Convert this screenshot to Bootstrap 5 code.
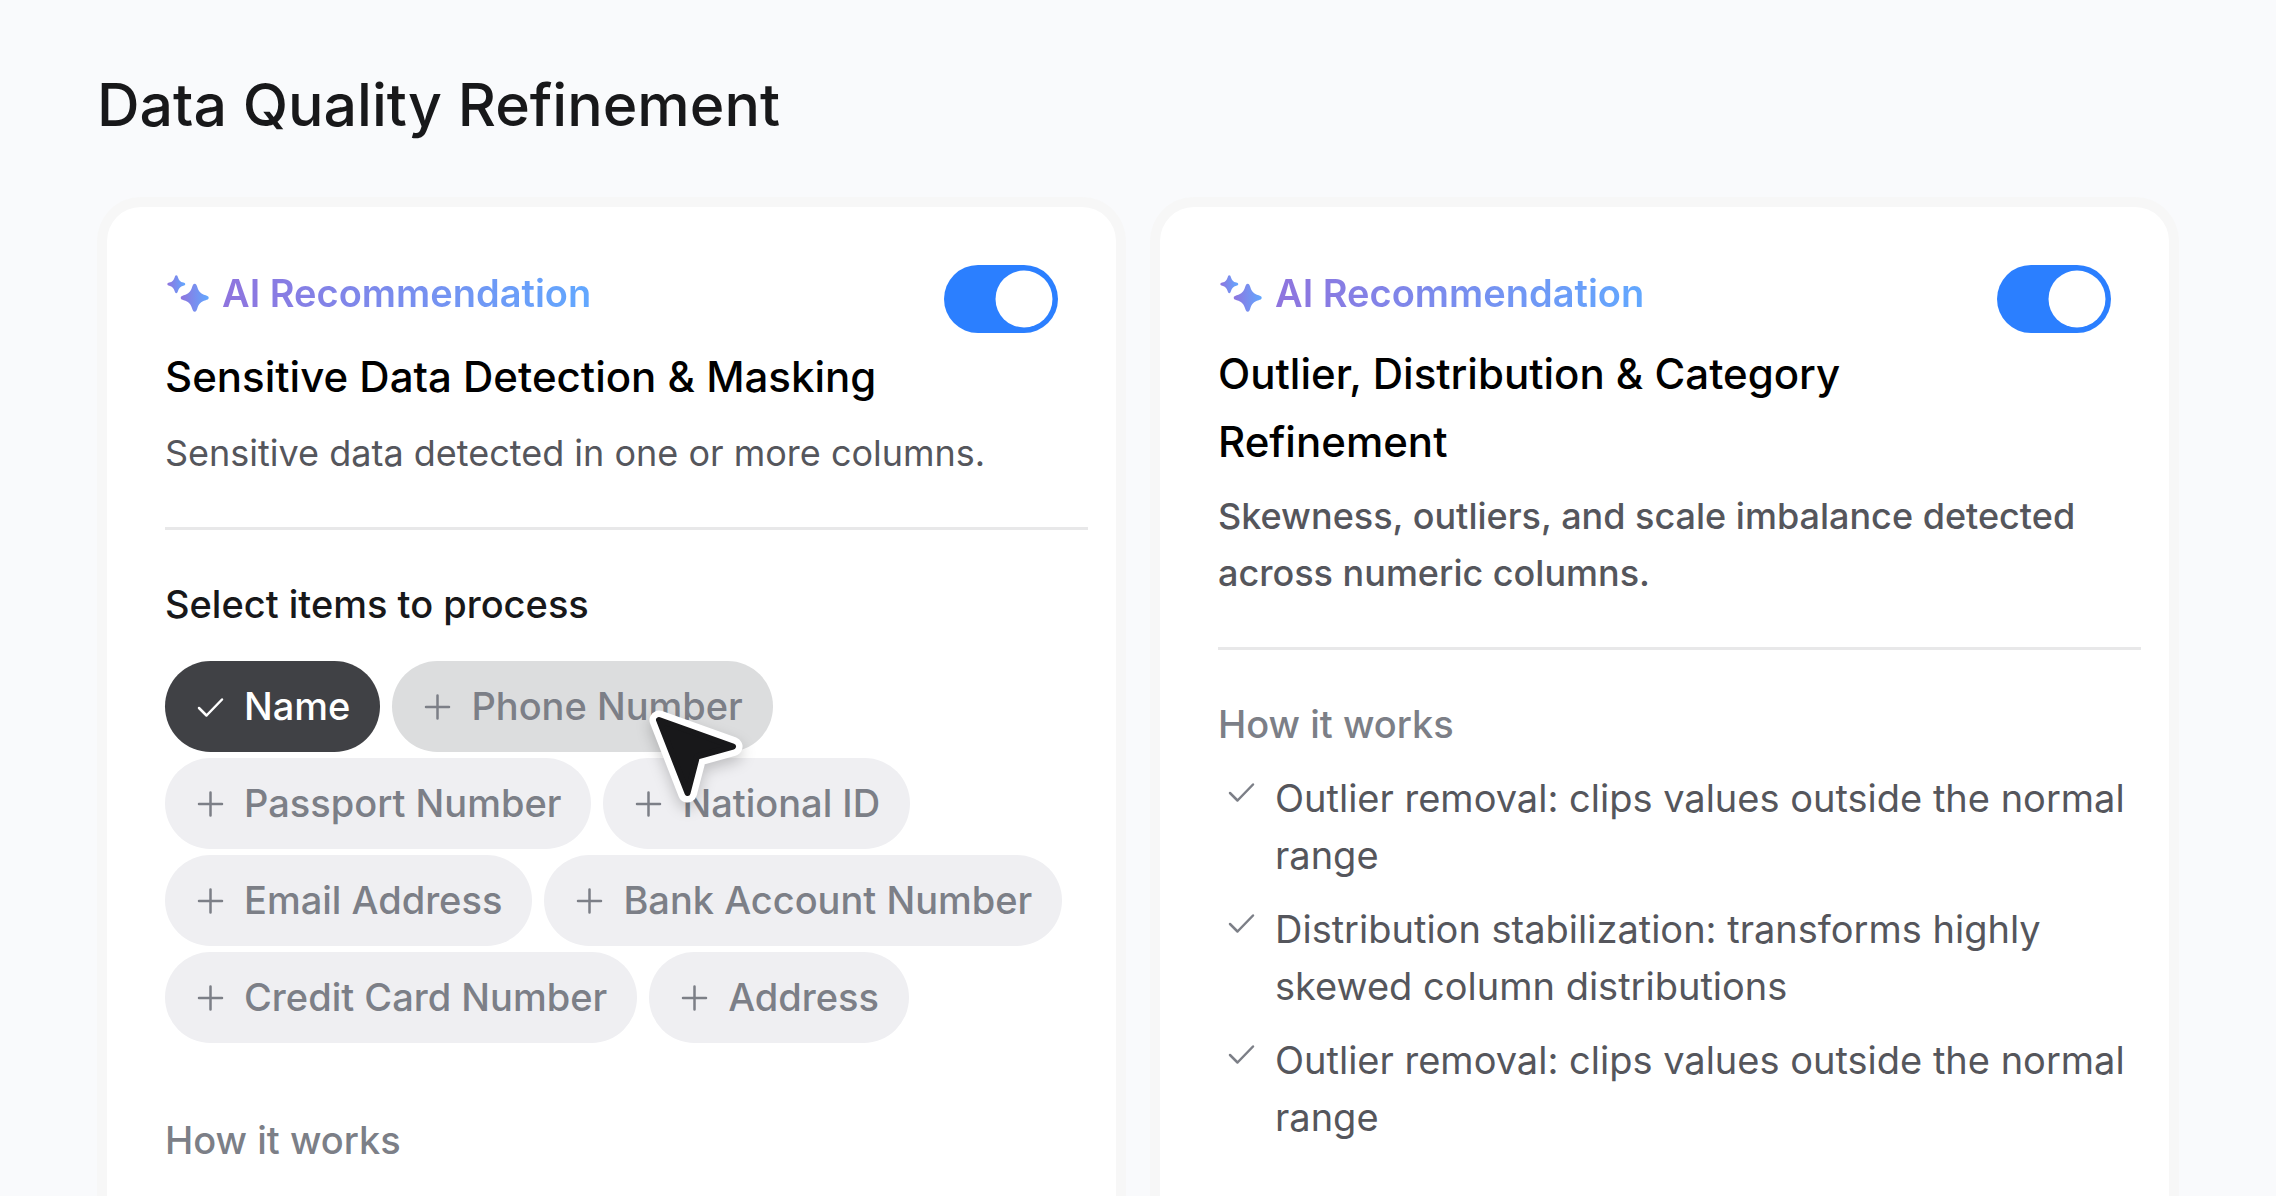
<!DOCTYPE html>
<html lang="en">
<head>
<meta charset="utf-8">
<meta name="viewport" content="width=device-width, initial-scale=1">
<title>Data Quality Refinement</title>
<link href="https://cdn.jsdelivr.net/npm/bootstrap@5.3.0/dist/css/bootstrap.min.css" rel="stylesheet">
<style>
  body { font-family: Inter, "Liberation Sans", sans-serif; background: #f9fafc; color: #18181a; }
  .page { padding: 60px 97px 0; }
  .page-title { font-size: 59px; line-height: 90px; font-weight: 500; margin-bottom: 47px; }
  .panels { gap: 24px; }
  .panel { flex: 1 1 0; min-width: 0; border: 10px solid #f7f7f7; border-bottom: 0; border-radius: 44px 44px 0 0; padding: 58px 28px 0 58px; }
  .panel-head, .panel-text { padding-right: 30px; }
  .ai-tag { gap: 13px; font-size: 38px; line-height: 57px; font-weight: 600; }
  .ai-tag span { background: linear-gradient(90deg, #8f74de, #62a8ff); -webkit-background-clip: text; background-clip: text; color: transparent; }
  .panel-title { font-size: 42px; line-height: 68px; font-weight: 500; color: #000; margin: 18px 0 12px; }
  .panel-title.single { margin: 21px 0 14px; }
  .panel-text { font-size: 36px; line-height: 57px; color: #55565c; margin-bottom: 45px; }
  .rule-line { border-top: 3px solid #e8e8e9; margin-bottom: 46px; }
  .label { font-size: 38px; line-height: 57px; font-weight: 500; margin-bottom: 28px; }
  .label.quiet { color: #7c7f87; margin-bottom: 17px; }
  .form-switch .form-check-input.toggle { width: 114px; height: 68px; margin: 0; border: 0; border-radius: 34px; cursor: pointer;
    background-image: url("data:image/svg+xml,%3csvg xmlns='http://www.w3.org/2000/svg' viewBox='-4 -4 8 8'%3e%3ccircle r='3.35' fill='%23fff'/%3e%3c/svg%3e"); }
  .toggle:checked { background-color: #2b7fff; }
  .chips { gap: 6px 12px; margin-bottom: 69px; }
  .chip { --bs-btn-bg: #efeff2; --bs-btn-color: #7c7f87; --bs-btn-hover-bg: #dcddde; --bs-btn-hover-color: #7c7f87;
    --bs-btn-border-width: 0; --bs-btn-padding-x: 30px; --bs-btn-padding-y: 17px;
    --bs-btn-font-size: 38px; --bs-btn-line-height: 57px; --bs-btn-font-weight: 500; gap: 19px; }
  .chip.picked { --bs-btn-bg: #404145; --bs-btn-color: #fff; }
  .chip.hovered { --bs-btn-bg: #dcddde; }
  .glyph { width: 30px; height: 30px; fill: none; stroke: currentColor; stroke-width: 2.5; stroke-linecap: round; stroke-linejoin: round; flex: none; }
  .pointer { right: 16px; top: 39px; width: 116px; height: 116px; overflow: visible; z-index: 2; pointer-events: none; filter: drop-shadow(0 6px 7px rgba(0,0,0,.2)); }
  .rules { gap: 17px; font-size: 38px; line-height: 57px; color: #55565c; }
  .rules li { gap: 19px; padding-left: 8px; }
  .rules .glyph { margin-top: 7px; color: #7c7f87; }
</style>
</head>
<body>
<svg width="0" height="0" class="position-absolute" aria-hidden="true">
  <defs>
    <linearGradient id="spark" x1="0" x2="1" y1="0" y2="0"><stop offset="0" stop-color="#8f74de"/><stop offset="1" stop-color="#62a8ff"/></linearGradient>
    <path id="star" fill="url(#spark)" d="M0-14C1.5-14 2-12.5 2.5-11C4-6 6-4 11-2.5C12.5-2 14-1.5 14 0C14 1.5 12.5 2 11 2.5C6 4 4 6 2.5 11C2 12.5 1.5 14 0 14C-1.5 14-2 12.5-2.5 11C-4 6-6 4-11 2.5C-12.5 2-14 1.5-14 0C-14-1.5-12.5-2-11-2.5C-6-4-4-6-2.5-11C-2-12.5-1.5-14 0-14Z"/>
    <symbol id="sparkles" viewBox="0 0 44 44"><use href="#star" transform="translate(11.3 12.2) scale(.64)"/><use href="#star" transform="translate(29.7 25.8)"/></symbol>
    <symbol id="plus" viewBox="0 0 30 30"><path d="M15.500 3.5V26.5M4 15H27"/></symbol>
    <symbol id="tick" viewBox="0 0 30 30"><path d="M4 16L11.500 23.5L27 7.5"/></symbol>
  </defs>
</svg>
<main class="page vh-100 overflow-hidden d-flex flex-column">
  <h1 class="page-title">Data Quality Refinement</h1>
  <div class="panels d-flex flex-grow-1">
    <section class="panel bg-white">
      <div class="panel-head d-flex justify-content-between align-items-start">
        <div>
          <div class="ai-tag d-flex align-items-center"><svg width="44" height="44" aria-hidden="true"><use href="#sparkles"/></svg><span>AI Recommendation</span></div>
          <h2 class="panel-title single" id="masking">Sensitive Data Detection &amp; Masking</h2>
        </div>
        <div class="form-check form-switch p-0 m-0"><input class="form-check-input toggle" type="checkbox" role="switch" aria-labelledby="masking" checked></div>
      </div>
      <p class="panel-text">Sensitive data detected in one or more columns.</p>
      <div class="rule-line"></div>
      <h3 class="label">Select items to process</h3>
      <div class="chips d-flex flex-wrap">
        <button type="button" class="btn chip picked rounded-pill d-flex align-items-center" aria-pressed="true"><svg class="glyph" aria-hidden="true"><use href="#tick"/></svg>Name</button>
        <button type="button" class="btn chip hovered rounded-pill d-flex align-items-center position-relative" aria-pressed="false"><svg class="glyph" aria-hidden="true"><use href="#plus"/></svg>Phone Number
          <svg class="pointer position-absolute" viewBox="0 0 116 116" aria-hidden="true"><g stroke-linejoin="round"><path d="M18 20L92 46.5L56 56.5L46.5 93Z" fill="#fff" stroke="#fff" stroke-width="19"/><path d="M18 20L92 46.5L56 56.5L46.5 93Z" fill="#18181a" stroke="#18181a" stroke-width="6"/></g></svg>
        </button>
        <button type="button" class="btn chip rounded-pill d-flex align-items-center" aria-pressed="false"><svg class="glyph" aria-hidden="true"><use href="#plus"/></svg>Passport Number</button>
        <button type="button" class="btn chip rounded-pill d-flex align-items-center" aria-pressed="false"><svg class="glyph" aria-hidden="true"><use href="#plus"/></svg>National ID</button>
        <button type="button" class="btn chip rounded-pill d-flex align-items-center" aria-pressed="false"><svg class="glyph" aria-hidden="true"><use href="#plus"/></svg>Email Address</button>
        <button type="button" class="btn chip rounded-pill d-flex align-items-center" aria-pressed="false"><svg class="glyph" aria-hidden="true"><use href="#plus"/></svg>Bank Account Number</button>
        <button type="button" class="btn chip rounded-pill d-flex align-items-center" aria-pressed="false"><svg class="glyph" aria-hidden="true"><use href="#plus"/></svg>Credit Card Number</button>
        <button type="button" class="btn chip rounded-pill d-flex align-items-center" aria-pressed="false"><svg class="glyph" aria-hidden="true"><use href="#plus"/></svg>Address</button>
      </div>
      <h3 class="label quiet mb-0">How it works</h3>
    </section>
    <section class="panel bg-white">
      <div class="panel-head d-flex justify-content-between align-items-start">
        <div>
          <div class="ai-tag d-flex align-items-center"><svg width="44" height="44" aria-hidden="true"><use href="#sparkles"/></svg><span>AI Recommendation</span></div>
          <h2 class="panel-title" id="outlier">Outlier, Distribution &amp; Category Refinement</h2>
        </div>
        <div class="form-check form-switch p-0 m-0"><input class="form-check-input toggle" type="checkbox" role="switch" aria-labelledby="outlier" checked></div>
      </div>
      <p class="panel-text fw-medium">Skewness, outliers, and scale imbalance detected across numeric columns.</p>
      <div class="rule-line"></div>
      <h3 class="label quiet">How it works</h3>
      <ul class="rules list-unstyled d-flex flex-column mb-0">
        <li class="d-flex align-items-start"><svg class="glyph" aria-hidden="true"><use href="#tick"/></svg><span>Outlier removal: clips values outside the normal range</span></li>
        <li class="d-flex align-items-start"><svg class="glyph" aria-hidden="true"><use href="#tick"/></svg><span>Distribution stabilization: transforms highly skewed column distributions</span></li>
        <li class="d-flex align-items-start"><svg class="glyph" aria-hidden="true"><use href="#tick"/></svg><span>Outlier removal: clips values outside the normal range</span></li>
      </ul>
    </section>
  </div>
</main>
<script src="https://cdn.jsdelivr.net/npm/bootstrap@5.3.0/dist/js/bootstrap.bundle.min.js"></script>
</body>
</html>
